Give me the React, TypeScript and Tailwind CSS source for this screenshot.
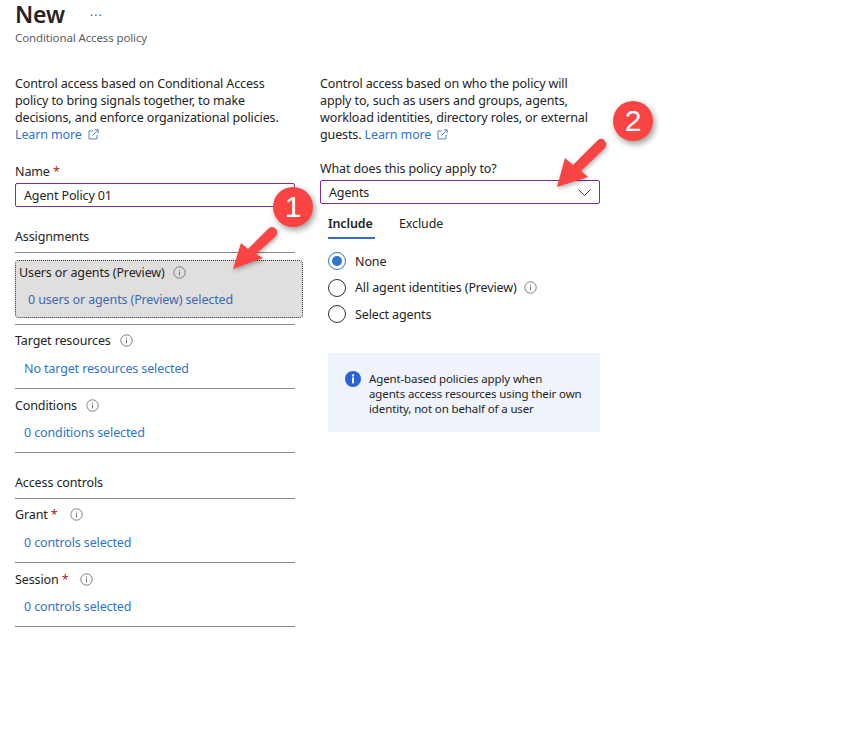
import React from "react";

const font = { fontFamily: '"Noto Sans", "Open Sans", sans-serif' };

function Info({ className = "" }: { className?: string }) {
  return (
    <svg width="13" height="13" viewBox="0 0 13 13" className={`shrink-0 ${className}`} fill="none">
      <circle cx="6.5" cy="6.5" r="5.7" stroke="#707070" strokeWidth="0.9" />
      <rect x="6" y="5.6" width="1" height="3.8" fill="#707070" />
      <rect x="6" y="3.6" width="1" height="1" fill="#707070" />
    </svg>
  );
}

function Ext() {
  return (
    <svg width="11" height="11" viewBox="0 0 11 11" fill="none" stroke="#3b78d0" strokeWidth="0.9" className="inline-block ml-[6px] mb-[2px]">
      <path d="M5 1.9H1v8h8V6" />
      <path d="M4.5 6.5 10 1M6.8 .8H10.2V4.2" />
    </svg>
  );
}

function Star() {
  return <span className="text-[#a4262c]"> *</span>;
}

function Section({
  title,
  star,
  link,
  gap,
  linkGap,
  infoGap,
}: {
  title: string;
  star?: boolean;
  link: string;
  gap: string;
  linkGap: string;
  infoGap: string;
}) {
  return (
    <div className={`h-[64px] border-b border-[#8a8886] flex flex-col ${gap}`}>
      <div className="flex items-center h-[18px]">
        <span>
          {title}
          {star && <Star />}
        </span>
        <Info className={infoGap} />
      </div>
      <div className={`ml-[9px] h-[18px] leading-[18px] text-[#2f74cf] ${linkGap}`}>{link}</div>
    </div>
  );
}

function Radio({ checked, label, info }: { checked?: boolean; label: string; info?: boolean }) {
  return (
    <div className="flex items-center h-[18px]">
      <span
        className={`w-[18px] h-[18px] rounded-full border flex items-center justify-center ${
          checked ? "border-[#2f74cf]" : "border-[#323130]"
        }`}
      >
        {checked && <span className="w-[10px] h-[10px] rounded-full bg-[#2f74cf]" />}
      </span>
      <span className="ml-[9px]">{label}</span>
      {info && <Info className="ml-[7px]" />}
    </div>
  );
}

function Badge({ n, className }: { n: string; className: string }) {
  return (
    <div
      className={`absolute w-[40px] h-[40px] rounded-full bg-[#fa4444] text-white text-[30px] leading-[40px] text-center shadow-[2px_3px_6px_rgba(0,0,0,0.4)] ${className}`}
      style={{ fontFamily: '"Liberation Sans", sans-serif', letterSpacing: 0 }}
    >
      {n}
    </div>
  );
}

export default function App() {
  return (
    <div
      className="relative w-[862px] h-[734px] bg-white text-[#242424] text-[12.5px] tracking-[-0.01em] leading-[17px] overflow-hidden pl-[15px]"
      style={font}
    >
      <div className="flex items-start h-[28px] pt-[1px]">
        <span className="text-[23px] leading-[27px] font-semibold">New</span>
        <span className="ml-[25px] mt-[8px] text-[12px] leading-[14px] text-[#605e5c] tracking-[1px]">···</span>
      </div>
      <div className="mt-[2px] text-[11.5px] leading-[16px] text-[#605e5c]">Conditional Access policy</div>

      <div className="flex mt-[29px]">
        <div className="w-[280px]">
          <p className="w-[280px]">
            Control access based on Conditional Access
            <br />
            policy to bring signals together, to make
            <br />
            decisions, and enforce organizational policies.
            <br />
            <span className="text-[#2f74cf]">Learn more</span>
            <Ext />
          </p>
          <div className="mt-[20px] h-[17px]">
            Name
            <Star />
          </div>
          <div className="mt-[3px] h-[24px] border border-[#7b2f9e] rounded-[2px] pl-[8px] leading-[23px]">Agent Policy 01</div>
          <div className="mt-[21px] h-[18px] leading-[18px]">Assignments</div>
          <div className="mt-[6px] border-t border-[#8a8886] pt-[7px] pb-[6px] border-b w-[280px]">
            <div className="w-[288px] h-[58px] bg-[#e1dfdd] border border-dotted border-[#333] rounded-[4px] pl-[3px] pt-[2px]">
              <div className="flex items-center h-[18px]">
                <span>Users or agents (Preview)</span>
                <Info className="ml-[8px]" />
              </div>
              <div className="mt-[10px] ml-[9px] leading-[18px] text-[#3a68b5]">0 users or agents (Preview) selected</div>
            </div>
          </div>
          <Section title="Target resources" link="No target resources selected" gap="pt-[6px]" linkGap="mt-[11px]" infoGap="ml-[9px]" />
          <Section title="Conditions" link="0 conditions selected" gap="pt-[7px]" linkGap="mt-[10px]" infoGap="ml-[9px]" />
          <div className="mt-[21px] h-[18px] leading-[18px]">Access controls</div>
          <div className="mt-[6px] border-t border-[#8a8886]" />
          <Section title="Grant" star link="0 controls selected" gap="pt-[6px]" linkGap="mt-[11px]" infoGap="ml-[12px]" />
          <Section title="Session" star link="0 controls selected" gap="pt-[7px]" linkGap="mt-[10px]" infoGap="ml-[12px]" />
        </div>

        <div className="ml-[25px] w-[280px]">
          <p>
            Control access based on who the policy will
            <br />
            apply to, such as users and groups, agents,
            <br />
            workload identities, directory roles, or external
            <br />
            guests. <span className="text-[#2f74cf]">Learn more</span>
            <Ext />
          </p>
          <div className="mt-[17px] h-[17px]">What does this policy apply to?</div>
          <div className="mt-[3px] h-[24px] border border-[#7b2f9e] rounded-[2px] pl-[8px] pr-[8px] leading-[23px] flex items-center justify-between">
            <span>Agents</span>
            <svg width="13" height="7" viewBox="0 0 13 7" fill="none" stroke="#444" strokeWidth="1">
              <path d="M.5.5l6 6 6-6" />
            </svg>
          </div>
          <div className="ml-[8px] mt-[10px] flex h-[25px] items-start">
            <div className="w-[47px] h-[25px] border-b-2 border-[#2f6fc4] font-semibold leading-[20px]">Include</div>
            <div className="ml-[24px] leading-[20px]">Exclude</div>
          </div>
          <div className="ml-[8px] mt-[13px] flex flex-col gap-[8.5px]">
            <Radio checked label="None" />
            <Radio label="All agent identities (Preview)" info />
            <Radio label="Select agents" />
          </div>
          <div className="ml-[8px] mt-[30px] h-[79px] bg-[#eff4fc] rounded-[2px] flex pl-[17px] pt-[18px] text-[11.5px] leading-[15px]">
            <svg width="16" height="16" viewBox="0 0 16 16" className="shrink-0">
              <circle cx="8" cy="8" r="8" fill="#2b62d6" />
              <rect x="7" y="6.5" width="2" height="5.8" fill="#fff" />
              <rect x="7" y="3.4" width="2" height="2" fill="#fff" />
            </svg>
            <div className="ml-[8px]">
              Agent-based policies apply when
              <br />
              agents access resources using their own
              <br />
              identity, not on behalf of a user
            </div>
          </div>
        </div>
      </div>

      {/* Annotations lying over the page */}
      <svg className="absolute left-0 top-0 pointer-events-none" width="862" height="734" style={{ filter: "drop-shadow(1px 2px 2px rgba(0,0,0,0.3))" }}>
        <path d="M233 269 L241 243 L248 249 L268 229 Q272 225 276 229 Q279 233 275 237 L256 254 L263 258 Z" fill="#fa4444" />
        <path d="M557 187 L565 158 L573 165 L598 140 Q602 137 605 141 Q608 145 604 149 L581 171 L588 177 Z" fill="#fa4444" />
      </svg>
      <Badge n="1" className="left-[273px] top-[187px]" />
      <Badge n="2" className="left-[613px] top-[101px]" />
    </div>
  );
}
